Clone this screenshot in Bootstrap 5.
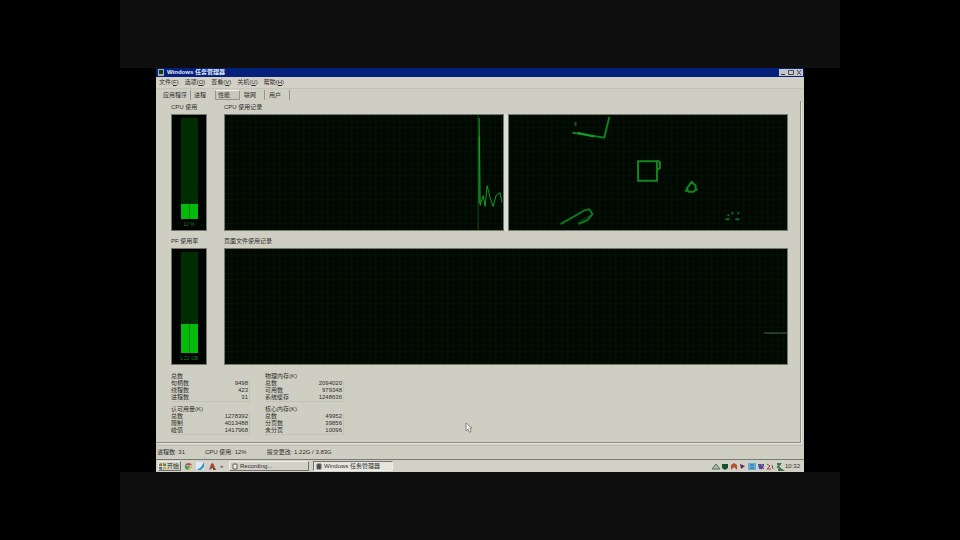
<!DOCTYPE html>
<html lang="zh-CN">
<head>
<meta charset="utf-8">
<meta name="viewport" content="width=device-width, initial-scale=1">
<title>Windows 任务管理器</title>
<link href="https://cdn.jsdelivr.net/npm/bootstrap@5.3.0/dist/css/bootstrap.min.css" rel="stylesheet">
<style>
  body { background: #000; color: #30302c; font: 6px/7px "Liberation Sans", "Noto Sans CJK SC", sans-serif; }
  button { font: inherit; color: inherit; background: none; border: 0; padding: 0; white-space: nowrap; }
  svg { display: block; flex: none; }
  .stage { width: 75%; }
  .band { background: #0f0f0f; }
  .desk { background: #000; padding: 0 5%; }
  .tm { background: #cfcec3; }
  .titlebar { background: #03207a; color: #e4ecff; height: 9px; padding: 0 1px 0 2px; gap: 3px; font-weight: 700; }
  .winbtn { width: 8px; height: 7px; background: #c4c6cc; display: grid; place-items: center; }
  .menus { height: 12px; padding: 0 3px; gap: 6px; border-bottom: 1px solid #c4c3b8; background: #d3d1c6; }
  .tabs { height: 12px; padding: 0 3px; }
  .tabs button { height: 10px; padding: 0 8px 0 4px; border-right: 1px solid #96968e; }
  .tabs button:first-child { padding-right: 3px; }
  .tabs button:nth-child(2) { padding-right: 9px; border-right: 0; padding-left: 3px; }
  .tabs button.on { background: #c8c8bd; border: 1px solid #96968e; border-top-color: #efefe6; padding: 0 9px 0 2px; }
  .pane { margin-right: 3px; padding: 3px 12px 7px 15px; border-right: 1px solid #8e908c; border-bottom: 1px solid #8e908c; box-shadow: 1px 1px #e4e4dc; }
  .monitor { gap: 17px; }
  .monitor + .monitor { margin-top: 7px; }
  .side { width: 36px; flex: none; }
  .caption { height: 10px; line-height: 7px; white-space: nowrap; }
  .plots { background: linear-gradient(#dcddd3, #dcddd3) center / 4px 100% no-repeat; }
  .plot { height: 117px; background-color: #000801; border: 1px solid #73776e; color: #159c26;
    background-image: linear-gradient(#03190780 1px, transparent 1px), linear-gradient(90deg, #03190780 1px, transparent 1px); background-size: 6px 6px; }
  .plot svg { width: 100%; height: 115px; }
  .gauge { height: 117px; background: #000400; border: 1px solid #73776e; padding-top: 3px; gap: 2px; color: #1b7928; font-size: 5px; }
  .column { width: 17px; height: 101px; flex: none; background: #002c02; display: flex; align-items: end; }
  .fill { width: 100%; background: linear-gradient(90deg, #04ba0b 8px, #058508 8px, #058508 9px, #04ba0b 9px); }
  .stats { padding-top: 8px; column-gap: 15px; row-gap: 4px; display: grid; grid-template-columns: 79px 79px; }
  .stats table { width: 100%; border-right: 1px solid #c2c2b7; border-bottom: 1px solid #c2c2b7; }
  .stats caption { padding: 0 0 1px; color: inherit; caption-side: top; line-height: 6px; white-space: nowrap; }
  .stats th { font-weight: 400; padding: 0; line-height: 7px; }
  .stats td { padding: 0 1px 0 0; text-align: right; line-height: 7px; }
  .status { height: 14px; padding: 0 1px; gap: 20px; margin-top: 2px; border-top: 1px solid #bfbfb5; white-space: nowrap; }
  .taskbar { height: 13px; padding: 1px 4px 1px 2px; border-top: 1px solid #777a76; background: #d2d1c7; }
  .raised { border: 1px solid #eeeee6; border-right-color: #73746f; border-bottom-color: #73746f; height: 10px; }
  .start { width: 23px; gap: 1px; }
  .quick { width: 44px; padding: 0 3px; gap: 3px; }
  .task { width: 80px; padding: 0 2px; gap: 2px; }
  .task.on { background: #e5e5de; border-color: #73746f #eeeee6 #eeeee6 #73746f; }
  .pointer { left: 48%; bottom: 9px; }
</style>
<script src="https://cdn.jsdelivr.net/npm/bootstrap@5.3.0/dist/js/bootstrap.bundle.min.js"></script>
</head>
<body>
<div class="stage mx-auto d-flex flex-column min-vh-100">
  <div class="band flex-fill"></div>
  <div class="desk">
    <main class="tm">
      <header class="titlebar d-flex align-items-center">
        <svg width="6" height="7"><rect width="6" height="7" fill="#9eb0a8"/><path d="M1 1h4v4H1z" fill="#17392d"/></svg>
        <span class="me-auto">Windows 任务管理器</span>
        <div class="d-flex">
          <button class="winbtn" aria-label="最小化"><svg width="6" height="5"><path d="M1 4.500h4" stroke="#333"/></svg></button>
          <button class="winbtn" aria-label="还原"><svg width="6" height="5"><path d="M.5.500h5v4h-5z" fill="none" stroke="#4b4e56"/></svg></button>
          <button class="winbtn" aria-label="关闭"><svg width="6" height="5"><path d="M1 0l4 5M5 0L1 5" stroke="#4b4e56"/></svg></button>
        </div>
      </header>
      <nav class="menus d-flex align-items-center">
        <button>文件(<u>F</u>)</button><button>选项(<u>O</u>)</button><button>查看(<u>V</u>)</button><button>关机(<u>U</u>)</button><button>帮助(<u>H</u>)</button>
      </nav>
      <div class="tabs d-flex align-items-center" role="tablist">
        <button role="tab">应用程序</button><button role="tab">进程</button><button role="tab" class="on" aria-selected="true">性能</button><button role="tab">联网</button><button role="tab">用户</button>
      </div>
      <section class="pane position-relative">
        <div class="monitor d-flex">
          <div class="side">
            <div class="caption">CPU 使用</div>
            <div class="gauge d-flex flex-column align-items-center">
              <div class="column"><div class="fill" style="height:15%"></div></div><span>12 %</span>
            </div>
          </div>
          <div class="flex-fill">
            <div class="caption">CPU 使用记录</div>
            <div class="plots d-flex gap-1">
              <div class="plot flex-fill w-50">
                <svg viewBox="0 0 280 117" preserveAspectRatio="none" fill="none" stroke="currentColor">
                  <path d="M255 0V117" stroke="#0b4a16"/>
                  <path d="M256 3L257 92L260 82L262 93L264 72L267 84L270 93L273 82L277 79L279 89"/>
                  <path d="M256 22V90" stroke-width="2" opacity=".6"/>
                </svg>
              </div>
              <div class="plot flex-fill w-50">
                <svg viewBox="0 0 280 117" preserveAspectRatio="none" fill="none" stroke="currentColor">
                  <path d="M64 18L77 20L96 23L101 2" stroke-width="2" opacity=".8"/>
                  <path d="M69 18L86 22" stroke-width="2"/>
                  <path d="M67 7v4" stroke="#225032" stroke-width="2"/>
                  <path d="M130 47h19v20h-19zM149 46l3 2v6l-3 2" stroke-width="2" opacity=".85"/>
                  <path d="M184 68l4 4v4l-2 2h-5l-2-3zM177 77h3M188 76h2" stroke-width="2" opacity=".85"/>
                  <path d="M52 111L76 97L81 96L84 101L79 107L70 111" stroke-width="2" opacity=".75"/>
                  <path d="M69 110L82 102" opacity=".5"/>
                  <path d="M218 106h4M228 106h4M225 99v2M221 101v2M231 99v2" stroke="#146a25" stroke-width="2"/>
                </svg>
              </div>
            </div>
          </div>
        </div>
        <div class="monitor d-flex">
          <div class="side">
            <div class="caption">PF 使用率</div>
            <div class="gauge d-flex flex-column align-items-center">
              <div class="column"><div class="fill" style="height:29%"></div></div><span>1.22 GB</span>
            </div>
          </div>
          <div class="flex-fill">
            <div class="caption">页面文件使用记录</div>
            <div class="plot">
              <svg viewBox="0 0 564 117" preserveAspectRatio="none"><path d="M541 85.500H564" stroke="#4a6552"/></svg>
            </div>
          </div>
        </div>
        <div class="stats">
          <table><caption>总数</caption><tbody>
            <tr><th scope="row">句柄数</th><td>9498</td></tr><tr><th scope="row">线程数</th><td>423</td></tr><tr><th scope="row">进程数</th><td>31</td></tr></tbody></table>
          <table><caption>物理内存(K)</caption><tbody>
            <tr><th scope="row">总数</th><td>2094020</td></tr><tr><th scope="row">可用数</th><td>979348</td></tr><tr><th scope="row">系统缓存</th><td>1248636</td></tr></tbody></table>
          <table><caption>认可用量(K)</caption><tbody>
            <tr><th scope="row">总数</th><td>1278392</td></tr><tr><th scope="row">限制</th><td>4013488</td></tr><tr><th scope="row">峰值</th><td>1417968</td></tr></tbody></table>
          <table><caption>核心内存(K)</caption><tbody>
            <tr><th scope="row">总数</th><td>49952</td></tr><tr><th scope="row">分页数</th><td>39856</td></tr><tr><th scope="row">未分页</th><td>10096</td></tr></tbody></table>
        </div>
        <svg class="pointer position-absolute" width="8" height="11" viewBox="0 0 8 11"><path d="M1 1v8l2-2 1 3h2L5 6h2z" fill="#eeeee8" stroke="#777" stroke-width=".8"/></svg>
      </section>
      <footer>
        <div class="status d-flex align-items-center"><span>进程数: 31</span><span>CPU 使用: 12%</span><span>提交更改: 1.22G / 3.83G</span></div>
        <div class="taskbar d-flex align-items-center">
          <button class="raised start d-flex align-items-center">
            <svg width="7" height="7"><path d="M0 1l3-1v3H0z" fill="#b86436"/><path d="M4 0l3 1v2H4z" fill="#4f9847"/><path d="M0 4h3v3L0 6z" fill="#4279aa"/><path d="M4 4h3v2L4 7z" fill="#c7b340"/></svg>开始</button>
          <div class="quick d-flex align-items-center">
            <svg width="9" height="9" viewBox="0 0 9 9"><path d="M1 3a4 4 0 0 1 7 0H5z" fill="#c9452e"/><path d="M1 3a4 4 0 0 0 3 5l1-3z" fill="#3e9647"/><path d="M8 3a4 4 0 0 1-4 5l1-4z" fill="#dfbd45"/><circle cx="4.500" cy="4.500" r="1.500" fill="#5e9bce"/></svg>
            <svg width="9" height="9" viewBox="0 0 9 9"><rect width="8" height="8" fill="#e0edf0"/><path d="M8 0v5L5 8H1l4-3z" fill="#3b91cb"/></svg>
            <svg width="9" height="9" viewBox="0 0 9 9"><path d="M1 8l2-6 2-1 3 7-3-2z" fill="#b44134"/><path d="M5 4l3 4H5z" fill="#406a3d"/></svg>
            <span>»</span>
          </div>
          <button class="raised task d-flex align-items-center ms-1"><svg width="6" height="7"><path d="M1 1h4v5H1z" fill="#e9e9df" stroke="#64655e"/></svg>Recording...</button>
          <button class="raised task on d-flex align-items-center ms-1"><svg width="6" height="7"><path d="M1 1h4v5H1z" fill="#375245" stroke="#666"/></svg>Windows 任务管理器</button>
          <div class="ms-auto d-flex align-items-center">
            <svg width="74" height="9" viewBox="0 0 74 9">
              <path d="M1 7l4-5 4 5z" fill="#aab8a9" stroke="#5b6c60"/><path d="M11 2h6v4l-3 2-3-2z" fill="#15532e"/>
              <path d="M20 8V3l3-2 3 2v5l-3-3z" fill="#b94b33"/><path d="M29 2l5 2-4 3z" fill="#58314c"/>
              <path d="M37 1h8v7h-8z" fill="#62afd1"/><path d="M39 3h4M39 6h4" stroke="#276a9e"/>
              <path d="M47 2h6v5h-5z" fill="#485099"/><path d="M50 2l3 3-3 3" fill="none" stroke="#b67799"/>
              <path d="M56 2l3 2-3 3h4M61 3l1 4" fill="none" stroke="#864e49"/><path d="M66 2h3l-2 3 4 3h-4" fill="none" stroke="#3f7650" stroke-width="2"/>
            </svg>
            <time>10:32</time>
          </div>
        </div>
      </footer>
    </main>
  </div>
  <div class="band flex-fill"></div>
</div>
</body>
</html>
